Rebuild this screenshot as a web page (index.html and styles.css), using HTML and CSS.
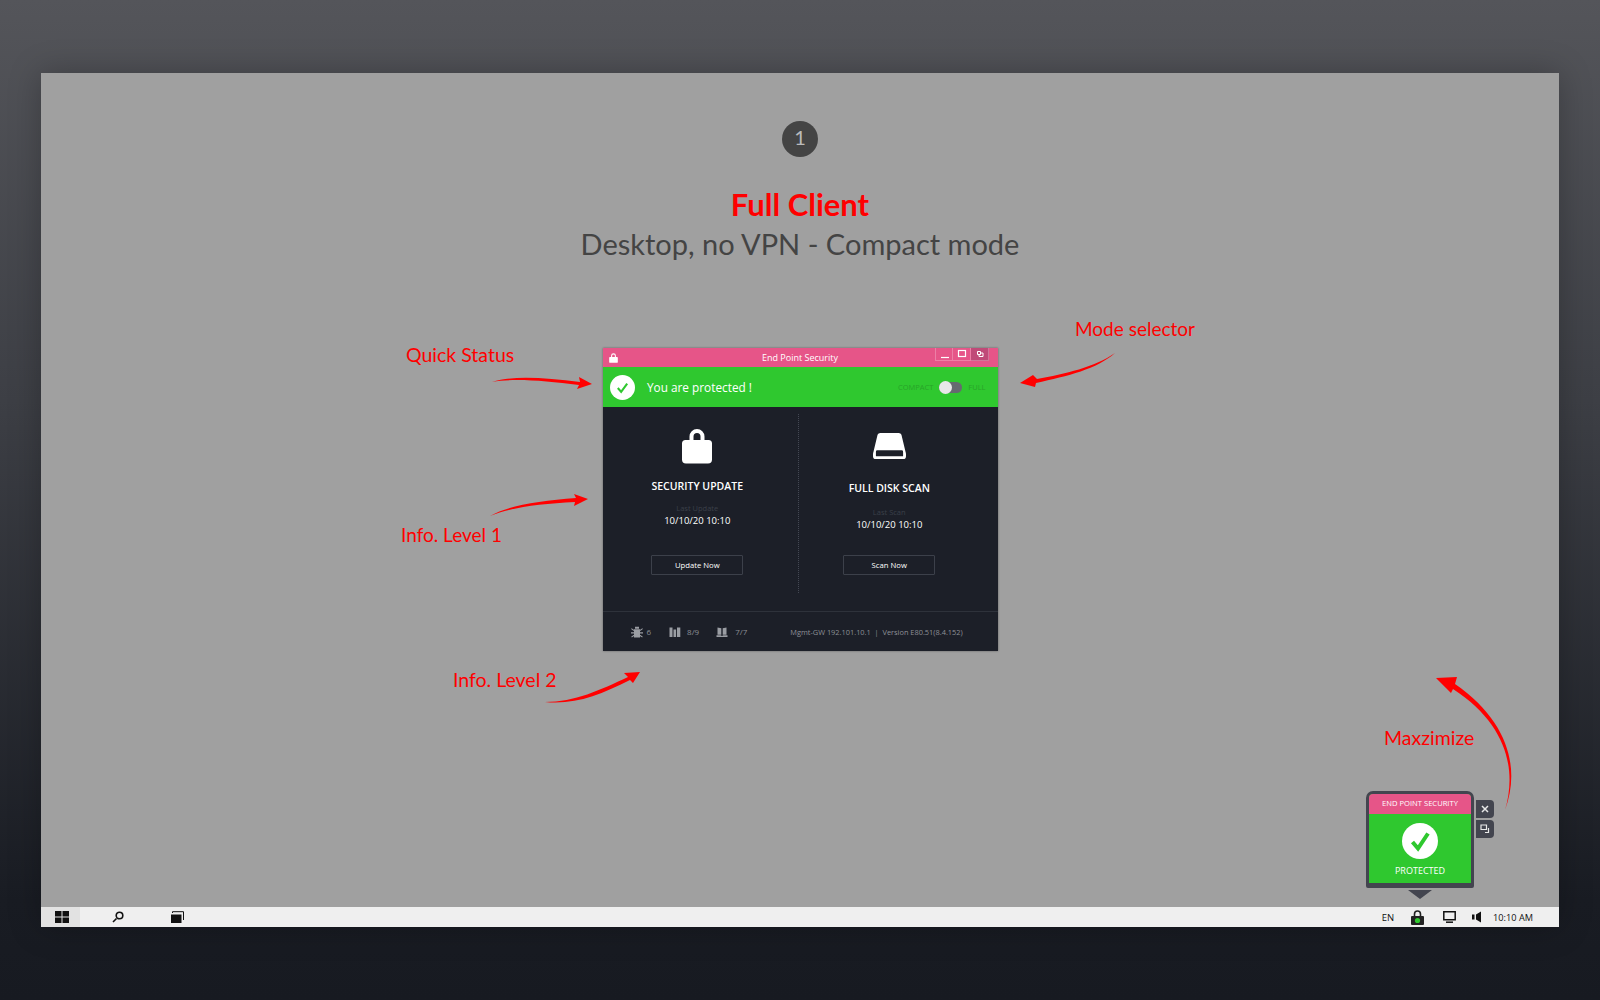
FILE: index.html
```html
<!DOCTYPE html>
<html lang="en">
<head>
<meta charset="utf-8">
<title>Full Client</title>
<link rel="stylesheet" href="styles.css">
</head>
<body>
<div class="screen">
  <main class="stage">
    <div class="badge">1</div>
    <h1 class="title">Full Client</h1>
    <h2 class="subtitle">Desktop, no VPN - Compact mode</h2>

    <section class="win">
      <header class="win-title">
        <svg class="win-lock" viewBox="0 0 10 11"><path fill="#fff" d="M2.300 4.500V3a2.700 2.700 0 0 1 5.400 0v1.500H9a.8.8 0 0 1 .8.8v4.600a1 1 0 0 1-1 1H1.200a1 1 0 0 1-1-1V5.300a.8.8 0 0 1 .8-.8zM3.500 4.500h3V3a1.500 1.500 0 0 0-3 0z"/></svg>
        <span class="win-name">End Point Security</span>
        <div class="win-controls">
          <span class="ctl"><svg viewBox="0 0 18 13"><path stroke="#fff" stroke-width="1.200" d="M5 9.500h8"/></svg></span>
          <span class="ctl"><svg viewBox="0 0 18 13"><rect x="5.500" y="2.500" width="7" height="6" fill="none" stroke="#fff" stroke-width="1.200"/></svg></span>
          <span class="ctl ctl-on"><svg viewBox="0 0 18 13"><path fill="none" stroke="#fff" d="M6.500 3.500h3v3h-3zM9.500 5h2.500v3.500H8V6.500"/></svg></span>
        </div>
      </header>
      <div class="status">
        <span class="status-check"><svg viewBox="0 0 24 24"><path fill="none" stroke="#2fc82f" stroke-width="2" d="M7.500 12.500l3.200 3.700 5.800-8"/></svg></span>
        <span class="status-text">You are protected !</span>
        <div class="mode">
          <span>COMPACT</span>
          <span class="toggle"><i class="knob"></i></span>
          <span>FULL</span>
        </div>
      </div>
      <div class="panels">
        <div class="panel panel-a">
          <svg class="icon-lock" viewBox="0 0 30 36"><path fill="#fff" fill-rule="evenodd" d="M7.500 12V8.500a7.500 7.500 0 0 1 15 0V12h4a3.500 3.500 0 0 1 3.500 3.500v16a4 4 0 0 1-4 4H4a4 4 0 0 1-4-4v-16A3.500 3.500 0 0 1 3.500 12zM11.500 12h7V8.500a3.500 3.500 0 0 0-7 0z"/></svg>
          <h3 class="panel-head">SECURITY UPDATE</h3>
          <p class="panel-label">Last Update</p>
          <p class="panel-date">10/10/20 10:10</p>
          <button class="panel-btn">Update Now</button>
        </div>
        <div class="panel panel-b">
          <svg class="icon-disk" viewBox="0 0 34 28"><path fill="#fff" fill-rule="evenodd" d="M7.500.5h19a3 3 0 0 1 2.800 2L33.500 20c.3 1 .5 1.500.5 2.500v2a3 3 0 0 1-3 3H3a3 3 0 0 1-3-3v-2c0-1 .2-1.500.5-2.500L4.700 2.500a3 3 0 0 1 2.800-2zM4.500 18.500A1.500 1.500 0 0 0 3 20v4.500h28V20a1.500 1.500 0 0 0-1.500-1.500z"/></svg>
          <h3 class="panel-head">FULL DISK SCAN</h3>
          <p class="panel-label">Last Scan</p>
          <p class="panel-date">10/10/20 10:10</p>
          <button class="panel-btn">Scan Now</button>
        </div>
      </div>
      <footer class="win-foot">
        <div class="stat stat-a">
          <svg viewBox="0 0 12 12"><path fill="#9a9da3" d="M4 .8h4v2H4zM3 3.300h6V11.500H3zM.6 2.300l2.600 1.800-.5.8L.1 3.100zM11.400 2.300L8.800 4.100l.5.8 2.600-1.800zM0 6.300h3v1.200H0zM12 6.300H9v1.200h3zM.3 10.500L3 8.800v1.200l-2.200 1.500zM11.700 10.500L9 8.800v1.200l2.200 1.500z"/></svg>
          <span>6</span>
        </div>
        <div class="stat stat-b">
          <svg viewBox="0 0 12 12"><path fill="#9a9da3" d="M.5 1.500h3v9.500h-3zM4.500 3.500h2.600V11H4.500zM8 1.500h3.300V11H8z"/></svg>
          <span>8/9</span>
        </div>
        <div class="stat stat-c">
          <svg viewBox="0 0 12 12"><path fill="#9a9da3" d="M1.500 1.500l3.800.8v6.500H1.500zM10.500 1.500l-3.800.8v6.500h3.800zM.5 9.200h4.200l1.300.8 1.300-.8h4.200V11H.5z"/></svg>
          <span>7/7</span>
        </div>
        <span class="foot-info">Mgmt-GW 192.101.10.1&nbsp; |&nbsp; Version E80.51(8.4.152)</span>
      </footer>
    </section>

    <svg class="arrows" viewBox="41 73 1518 834">
      <g fill="#ff0000">
        <path d="M492 382C515 375 545 378 580 382L579 377L592 384L577 389L579 385C545 381 515 378 492 382Z"/>
        <path d="M490 516C510 505 540 501 576 498L574 494L588 499L574 506L575 502C540 504 512 507 490 516Z"/>
        <path d="M545 702C575 702 600 690 628 677L624 673L640 672L633 683L630 680C600 695 575 705 545 702Z"/>
        <path d="M1115 353C1095 367 1065 374 1037 379L1033 375L1020 383L1035 387L1036 383C1068 376 1097 369 1115 353Z"/>
        <path d="M1505 810C1520 770 1510 722 1455 684L1457 677L1436 678L1451 693L1453 689C1507 724 1517 770 1505 810Z"/>
      </g>
    </svg>
    <span class="note note-quick">Quick Status</span>
    <span class="note note-l1">Info. Level 1</span>
    <span class="note note-l2">Info. Level 2</span>
    <span class="note note-mode">Mode selector</span>
    <span class="note note-max">Maxzimize</span>

    <aside class="mini">
      <div class="mini-card">
        <div class="mini-head">END POINT SECURITY</div>
        <div class="mini-body">
          <span class="mini-check"><svg viewBox="0 0 36 36"><path fill="none" stroke="#2fc82f" stroke-width="4" d="M10.500 19l5.500 6.500 10-15"/></svg></span>
          <span class="mini-text">PROTECTED</span>
        </div>
      </div>
      <div class="mini-tools">
        <span class="tool"><svg viewBox="0 0 18 18"><path stroke="#e8e8e8" stroke-width="1.500" d="M6 6l6 6M12 6l-6 6"/></svg></span>
        <span class="tool"><svg viewBox="0 0 18 18"><path fill="none" stroke="#e8e8e8" stroke-width="1.200" d="M5 5h5.500v4.500H5zM12.500 8v4.500H9"/></svg></span>
      </div>
      <i class="mini-tip"></i>
    </aside>
  </main>

  <nav class="taskbar">
    <span class="start"><svg viewBox="0 0 14 12"><path fill="#111" d="M0 0h6.500v5.500H0zM7.500 0H14v5.500H7.500zM0 6.500h6.500V12H0zM7.500 6.500H14V12H7.500z"/></svg></span>
    <svg class="tb-search" viewBox="0 0 12 12"><path fill="none" stroke="#111" stroke-width="1.600" d="M4.500 7.500L1 11"/><circle cx="7.500" cy="4.500" r="3.300" fill="none" stroke="#111" stroke-width="1.600"/></svg>
    <svg class="tb-views" viewBox="0 0 13 12"><path fill="#111" d="M0 3.500h10.500V12H0z"/><path fill="none" stroke="#111" d="M1.500 2V.7h11V9"/></svg>
    <div class="tray">
      <span class="tray-en">EN</span>
      <svg class="tray-lock" viewBox="0 0 13 15"><path fill="none" stroke="#222" stroke-width="1.600" d="M3.500 7V4a3 3 0 0 1 6 0v3"/><rect y="6" width="13" height="9" rx="1" fill="#222"/><circle cx="6.500" cy="10.500" r="2.600" fill="#2fc82f"/></svg>
      <svg class="tray-mon" viewBox="0 0 13 12"><path fill="none" stroke="#111" stroke-width="1.500" d="M.8.800h11.400v8H.8z"/><path stroke="#111" stroke-width="1.500" d="M3 11.200h7"/></svg>
      <svg class="tray-vol" viewBox="0 0 9 12"><path fill="#111" d="M0 3.500h2.500v5H0zM4 3.500L9 .5v11L4 8.500z"/></svg>
      <span class="tray-time">10:10 AM</span>
    </div>
  </nav>
</div>
</body>
</html>
```
FILE: styles.css
```css
* { box-sizing: border-box; }
html, body { margin: 0; height: 100%; }
body {
  padding: 73px 41px;
  background: linear-gradient(180deg, #54555a 0, #3d3f45 40%, #191c23 90%, #171a21 100%);
  font-family: "Open Sans", "Noto Sans", sans-serif;
  overflow: hidden;
}
svg { display: block; }
.screen {
  height: 854px;
  display: flex;
  flex-direction: column;
  box-shadow: 0 0 30px rgba(0, 0, 0, .25);
}
.stage {
  flex: 1;
  position: relative;
  background: #a0a0a0;
  display: flex;
  flex-direction: column;
  align-items: center;
  padding-top: 48px;
}
.badge {
  width: 36px;
  height: 36px;
  border-radius: 50%;
  background: #444;
  color: #bbb;
  font: 20px/33px "Lato", sans-serif;
  text-align: center;
}
.title {
  margin: 27px 0 0;
  color: #f00;
  font: 700 31px/40px "Lato", sans-serif;
}
.subtitle {
  margin: 0;
  color: #444;
  font: 400 29px/40px "Lato", sans-serif;
}

/* client window */
.win {
  width: 395px;
  height: 303px;
  margin-top: 84px;
  display: flex;
  flex-direction: column;
  background: #1c1f28;
  box-shadow: 0 0 2px rgba(0, 0, 0, .4);
}
.win-title {
  height: 19px;
  position: relative;
  flex: none;
  display: flex;
  align-items: center;
  justify-content: center;
  background: #e65588;
}
.win-lock {
  position: absolute;
  left: 6px;
  top: 5px;
  width: 9px;
  height: 10px;
}
.win-name {
  color: #fff;
  font-size: 9px;
  line-height: 19px;
}
.win-controls {
  position: absolute;
  right: 9px;
  top: 0;
  display: flex;
  height: 13px;
}
.ctl {
  width: 18px;
  height: 13px;
  border: 1px solid rgba(255, 255, 255, .25);
  border-top: 0;
  border-left-width: 0;
}
.ctl:first-child { border-left-width: 1px; }
.ctl svg { width: 18px; height: 13px; }
.ctl-on { background: #c04a78; }
.status {
  height: 40px;
  flex: none;
  display: flex;
  align-items: center;
  padding: 0 12px 0 7.500px;
  background: #2fc82f;
  color: #fff;
}
.status-check {
  width: 25px;
  height: 25px;
  border-radius: 50%;
  background: #fff;
}
.status-check svg { width: 25px; height: 25px; }
.status-text {
  margin-left: 12px;
  font-size: 11.800px;
}
.mode {
  margin-left: auto;
  display: flex;
  align-items: center;
  gap: 6px;
  color: #28a428;
  font-size: 7.500px;
}
.toggle {
  width: 23px;
  height: 11px;
  border-radius: 6px;
  background: #666a70;
  position: relative;
}
.knob {
  position: absolute;
  left: 0;
  top: -1px;
  width: 13px;
  height: 13px;
  border-radius: 50%;
  background: #e8e8e8;
}
.panels {
  height: 204px;
  flex: none;
  display: grid;
  grid-template-columns: 1fr 1fr;
  padding: 3px 0 0;
  position: relative;
}
.panels::after {
  content: "";
  position: absolute;
  left: 195.500px;
  top: 7px;
  height: 179px;
  border-left: 1px dotted #444853;
}
.panel {
  display: flex;
  flex-direction: column;
  align-items: center;
  color: #fff;
}
.panel-a { padding: 18px 8px 0 0; }
.panel-b { padding: 22px 19px 0 0; }
.icon-lock { width: 30px; height: 36px; }
.icon-disk { width: 33px; height: 28px; }
.panel-head {
  margin: 14px 0 0;
  font-size: 10.500px;
  line-height: 16px;
  font-weight: 600;
}
.panel-b .panel-head { margin-top: 20px; }
.panel-label {
  margin: 9px 0 0;
  font-size: 7.500px;
  line-height: 10px;
  color: #3b3f48;
}
.panel-b .panel-label { margin-top: 11px; }
.panel-date {
  margin: 1px 0 0;
  font-size: 9.500px;
  line-height: 14px;
}
.panel-btn {
  width: 92px;
  height: 20px;
  margin-top: 27px;
  padding: 0;
  border: 1px solid #3c404a;
  border-radius: 1px;
  background: transparent;
  color: #fff;
  font: 7.700px "Open Sans", sans-serif;
}
.panel-b .panel-btn { margin-top: 23px; }
.win-foot {
  flex: 1;
  display: flex;
  align-items: center;
  border-top: 1px solid #2e323b;
  padding-left: 28px;
  color: #8d9097;
  font-size: 8px;
}
.stat { display: flex; align-items: center; }
.stat svg { width: 12px; height: 12px; }
.stat span { margin-left: 4px; }
.stat-b { margin-left: 18px; }
.stat-b span { margin-left: 6px; }
.stat-c { margin-left: 17px; }
.stat-c span { margin-left: 7px; }
.foot-info { margin-left: 43px; font-size: 7.400px; }

/* annotations */
.arrows {
  position: absolute;
  left: 0;
  top: 0;
  width: 1518px;
  height: 834px;
  pointer-events: none;
}
.note {
  position: absolute;
  color: #f00;
  font: 400 19.500px/24px "Lato", sans-serif;
  white-space: nowrap;
}
.note-quick { left: 365px; top: 270px; }
.note-l1 { left: 360px; top: 450px; font-size: 19px; }
.note-l2 { left: 412px; top: 595px; }
.note-mode { left: 1034px; top: 244px; font-size: 19px; }
.note-max { left: 1343px; top: 653px; }

/* minimised widget */
.mini {
  position: absolute;
  left: 1325px;
  top: 718px;
  display: flex;
  align-items: flex-start;
}
.mini-card {
  width: 108px;
  height: 97px;
  border: 3px solid #43454f;
  border-bottom-width: 5px;
  border-radius: 7px 7px 2px 2px;
  background: #2fc82f;
  overflow: hidden;
}
.mini-head {
  height: 20px;
  background: #e65588;
  color: #fff;
  font-size: 7.600px;
  line-height: 19px;
  text-align: center;
}
.mini-body {
  display: flex;
  flex-direction: column;
  align-items: center;
  padding-top: 9px;
  color: #fff;
}
.mini-check {
  width: 36px;
  height: 36px;
  border-radius: 50%;
  background: #fff;
}
.mini-check svg { width: 36px; height: 36px; }
.mini-text {
  margin-top: 4px;
  font-size: 9px;
  line-height: 16px;
}
.mini-tools {
  margin: 9px 0 0 2px;
  display: flex;
  flex-direction: column;
  gap: 2px;
}
.tool {
  width: 18px;
  height: 18px;
  border-radius: 0 4px 4px 0;
  background: #43454f;
}
.tool svg { width: 18px; height: 18px; }
.mini-tip {
  position: absolute;
  left: 42px;
  top: 99px;
  width: 0;
  height: 0;
  border-left: 12px solid transparent;
  border-right: 12px solid transparent;
  border-top: 9px solid #43454f;
}

/* taskbar */
.taskbar {
  height: 20px;
  flex: none;
  display: flex;
  align-items: center;
  background: #efefef;
  color: #111;
}
.start {
  width: 39px;
  height: 20px;
  display: flex;
  align-items: center;
  justify-content: center;
  padding-left: 2px;
  background: #e2e2e2;
}
.start svg { width: 14px; height: 12px; }
.tb-search { width: 12px; height: 12px; margin-left: 32px; }
.tb-views { width: 13px; height: 12px; margin-left: 47px; }
.tray {
  margin-left: auto;
  margin-right: 26px;
  display: flex;
  align-items: center;
  font-size: 9.500px;
}
.tray-lock { width: 13px; height: 15px; margin-left: 17px; }
.tray-mon { width: 13px; height: 12px; margin-left: 19px; }
.tray-vol { width: 9px; height: 12px; margin-left: 16px; }
.tray-time { margin-left: 12px; font-size: 9.200px; }
```
